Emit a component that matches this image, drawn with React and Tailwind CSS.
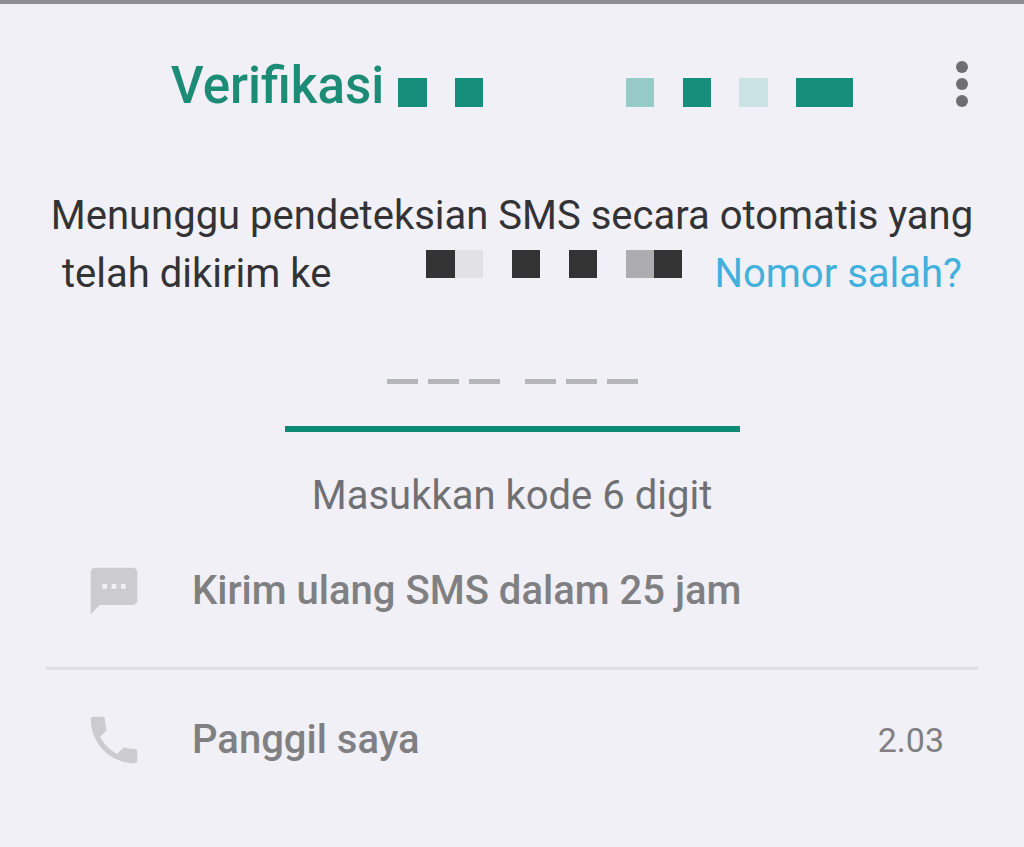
import { useState } from "react";
import { MdSms } from "react-icons/md";

const titleBlocks = [
  "bg-[#158e7b]",
  "",
  "bg-[#158e7b]",
  "",
  "",
  "",
  "",
  "",
  "bg-[#97cbc7]",
  "",
  "bg-[#158e7b]",
  "",
  "bg-[#cbe2e2]",
  "",
  "bg-[#158e7b]",
  "bg-[#158e7b]",
];

const phoneBlocks = [
  "bg-[#333333]",
  "bg-[#e1e0e5]",
  "",
  "bg-[#333333]",
  "",
  "bg-[#333333]",
  "",
  "bg-[#adadb0]",
  "bg-[#333333]",
];

const Blocks = ({ cells, className }) => (
  <span aria-hidden="true" className={className}>
    {cells.map((color, i) => (
      <span key={i} className={color} />
    ))}
  </span>
);

const Dashes = () => (
  <span className="flex gap-[10px]">
    {[0, 1, 2].map((i) => (
      <span key={i} className="w-[31px] h-[5px] bg-[#b4b6ba]" />
    ))}
  </span>
);

const PhoneIcon = () => (
  <svg
    viewBox="0 0 24 24"
    fill="currentColor"
    aria-hidden="true"
    className="size-[62px] shrink-0"
  >
    <path d="M6.62 10.79c1.44 2.83 3.76 5.14 6.59 6.59l2.2-2.2c.27-.27.67-.36 1.02-.24 1.12.37 2.33.57 3.57.57.55 0 1 .45 1 1V20c0 .55-.45 1-1 1-9.39 0-17-7.61-17-17 0-.55.45-1 1-1h3.5c.55 0 1 .45 1 1 0 1.25.2 2.45.57 3.57.11.35.03.74-.25 1.02l-2.2 2.2z" />
  </svg>
);

const App = () => {
  const [code, setCode] = useState("");

  return (
    <div className="min-h-screen bg-[#f1f0f6] border-t-4 border-[#8e8d93] font-['Roboto',sans-serif] text-[40px] leading-[58px]">
      {/* Header */}
      <header className="grid grid-cols-[1fr_auto_1fr] items-center pt-[52px]">
        <div className="col-start-2 flex items-center gap-[14px]">
          <h1 className="text-[51px] leading-[60px] font-medium text-[#1d8c76]">
            Verifikasi
          </h1>
          <Blocks
            cells={titleBlocks}
            className="mt-3 grid grid-cols-[repeat(16,1fr)] w-[455px] h-[29px]"
          />
        </div>
        <button
          type="button"
          aria-label="Opsi lainnya"
          className="justify-self-end mr-[56px] pb-1 flex flex-col gap-[5px]"
        >
          <span className="size-3 rounded-full bg-[#6f6f72]" />
          <span className="size-3 rounded-full bg-[#6f6f72]" />
          <span className="size-3 rounded-full bg-[#6f6f72]" />
        </button>
      </header>

      <main>
        <div className="mt-[71px] flex flex-col items-center text-[#333336]">
          <p>Menunggu pendeteksian SMS secara otomatis yang</p>
          <p className="flex">
            telah dikirim ke
            <Blocks
              cells={phoneBlocks}
              className="ml-[95px] mr-8 mt-[5px] grid grid-cols-[repeat(9,1fr)] w-[256px] h-[28px]"
            />
            <a href="#nomor" className="text-[#42b0dc]">
              Nomor salah?
            </a>
          </p>
        </div>

        {/* Code input */}
        <div className="mt-[47px] flex flex-col items-center">
          <div className="grid w-[455px] h-[82px] border-b-6 border-[#0b8a74]">
            {code === "" && (
              <span
                aria-hidden="true"
                className="col-start-1 row-start-1 flex justify-center gap-[25px] pt-[29px] pointer-events-none"
              >
                <Dashes />
                <Dashes />
              </span>
            )}
            <input
              id="code"
              type="text"
              inputMode="numeric"
              maxLength={6}
              value={code}
              onChange={(e) => setCode(e.target.value)}
              className="col-start-1 row-start-1 w-full bg-transparent text-center text-[#333336] outline-none"
            />
          </div>
          <label htmlFor="code" className="mt-[35px] text-[#707074]">
            Masukkan kode 6 digit
          </label>
        </div>

        {/* Other ways to get the code */}
        <div className="mx-[46px] mt-9 font-medium text-[#808083]">
          <button
            type="button"
            className="flex w-full items-center pl-10 pb-[46px] border-b-3 border-[#e0dfe4] text-left leading-[60px]"
          >
            <span className="w-14 flex justify-center text-[#cccbd0]">
              <MdSms size={56} className="shrink-0" />
            </span>
            <span className="ml-[50px]">Kirim ulang SMS dalam 25 jam</span>
          </button>
          <button
            type="button"
            className="flex w-full items-center pl-10 pt-[39px] pr-[34px] text-left leading-[60px]"
          >
            <span className="w-14 flex justify-center text-[#cccbd0]">
              <PhoneIcon />
            </span>
            <span className="ml-[50px]">Panggil saya</span>
            <span className="ml-auto text-[34px] font-normal">2.03</span>
          </button>
        </div>
      </main>
    </div>
  );
};

export default App;
